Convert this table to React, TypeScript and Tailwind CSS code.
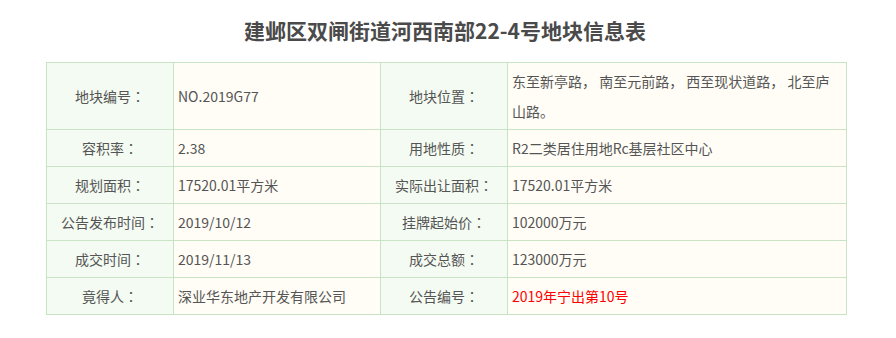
import React from "react";

const rows: { l1: string; v1: string; l2: string; v2: string; red?: boolean }[] = [
  { l1: "地块编号", v1: "NO.2019G77", l2: "地块位置", v2: "东至新亭路， 南至元前路， 西至现状道路， 北至庐山路。" },
  { l1: "容积率", v1: "2.38", l2: "用地性质", v2: "R2二类居住用地Rc基层社区中心" },
  { l1: "规划面积", v1: "17520.01平方米", l2: "实际出让面积", v2: "17520.01平方米" },
  { l1: "公告发布时间", v1: "2019/10/12", l2: "挂牌起始价", v2: "102000万元" },
  { l1: "成交时间", v1: "2019/11/13", l2: "成交总额", v2: "123000万元" },
  { l1: "竟得人", v1: "深业华东地产开发有限公司", l2: "公告编号", v2: "2019年宁出第10号", red: true },
];

function Colon() {
  return <span style={{ fontFamily: '"Noto Sans CJK JP", "Noto Sans CJK SC", sans-serif' }}>：</span>;
}

export default function App() {
  const font = { fontFamily: '"Noto Sans CJK SC", "Noto Sans", sans-serif' };
  const label = "border border-[#c9e4c5] bg-[#f4fbf2] text-center align-middle px-1 py-[3px] leading-[30px]";
  const value = "border border-[#c9e4c5] bg-[#fffdf6] text-left align-middle px-1 py-[3px] leading-[30px]";
  return (
    <div className="w-[896px] h-[338px] bg-white text-[#555] text-[14px]" style={font}>
      <div className="h-[62px] flex items-center justify-center pr-[6px]">
        <h1 className="text-[21px] font-bold text-[#4a4a4a] leading-[28px] -mt-[2px]">建邺区双闸街道河西南部22-4号地块信息表</h1>
      </div>
      <table className="ml-[46px] w-[800px] border-collapse table-fixed">
        <colgroup>
          <col className="w-[127px]" />
          <col className="w-[207px]" />
          <col className="w-[127px]" />
          <col className="w-[339px]" />
        </colgroup>
        <tbody>
          {rows.map((r, i) => (
            <tr key={i}>
              <td className={label}>
                {r.l1}
                <Colon />
              </td>
              <td className={value}>{r.v1}</td>
              <td className={label}>
                {r.l2}
                <Colon />
              </td>
              <td className={value + (r.red ? " text-[#ff0000]" : "")}>{r.v2}</td>
            </tr>
          ))}
        </tbody>
      </table>
    </div>
  );
}
